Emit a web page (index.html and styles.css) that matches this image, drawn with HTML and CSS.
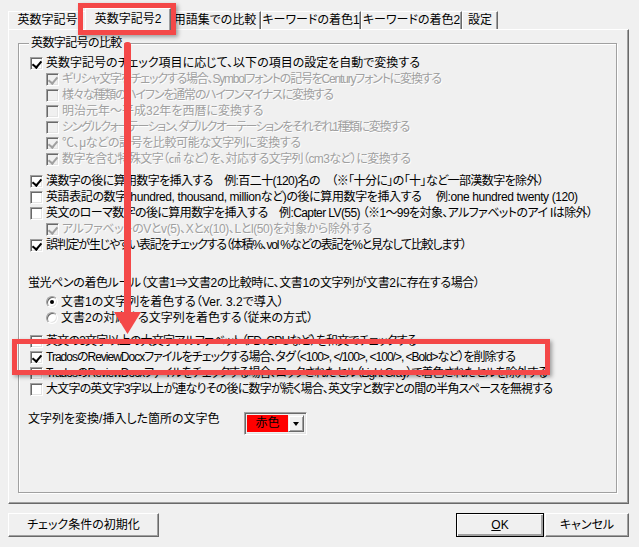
FILE: index.html
```html
<!DOCTYPE html>
<html lang="ja">
<head>
<meta charset="utf-8">
<link rel="stylesheet" href="styles.css">
</head>
<body>
<div class="window">
  <div class="tabs">
    <div class="tab t1">英数字記号</div>
    <div class="tab t2 active">英数字記号2</div>
    <div class="tab t3">用語集での比較</div>
    <div class="tab t4">キーワードの着色1</div>
    <div class="tab t5">キーワードの着色2</div>
    <div class="tab t6">設定</div>
  </div>
  <div class="panel">
    <fieldset class="group">
      <legend>英数字記号の比較</legend>
      <div class="block">
        <div class="row"><span class="cb on"></span><span class="lbl">英数字記号のチェック項目に応じて、以下の項目の設定を自動で変換する</span></div>
        <div class="row sub dis"><span class="cb on"></span><span class="lbl sq-d">ギリシャ文字をチェックする場合、Symbolフォントの記号をCenturyフォントに変換する</span></div>
        <div class="row sub dis"><span class="cb"></span><span class="lbl sq-d">様々な種類のハイフンを通常のハイフンマイナスに変換する</span></div>
        <div class="row sub dis"><span class="cb"></span><span class="lbl">明治元年～平成32年を西暦に変換する</span></div>
        <div class="row sub dis"><span class="cb"></span><span class="lbl sq-e">シングルクォーテーション、ダブルクオーテーションをそれぞれ1種類に変換する</span></div>
        <div class="row sub dis"><span class="cb on"></span><span class="lbl sq-a">℃、μなどの記号を比較可能な文字列に変換する</span></div>
        <div class="row sub dis"><span class="cb on"></span><span class="lbl sq-b">数字を含む特殊文字（㎠ など）を、対応する文字列（cm3など）に変換する</span></div>
      </div>
      <div class="block b2">
        <div class="row"><span class="cb on"></span><span class="lbl sq-b">漢数字の後に算用数字を挿入する　例:百二十(120)名の　（※「十分に」の「十」など一部漢数字を除外）</span></div>
        <div class="row"><span class="cb"></span><span class="lbl sq-a">英語表記の数字(hundred, thousand, millionなど)の後に算用数字を挿入する　 例:one hundred twenty (120)</span></div>
        <div class="row"><span class="cb"></span><span class="lbl sq-b">英文のローマ数字の後に算用数字を挿入する　例:Capter LV(55) （※1～99を対象、アルファベットのアイ Iは除外）</span></div>
        <div class="row sub dis"><span class="cb on"></span><span class="lbl sq-a">アルファベットのVとv(5)、Xとx(10)、Lとl(50)を対象から除外する</span></div>
        <div class="row"><span class="cb on"></span><span class="lbl sq-d">誤判定が生じやすい表記をチェックする（体積%、vol %などの表記を%と見なして比較します）</span></div>
      </div>
      <div class="caption sq-a">蛍光ペンの着色ルール（文書1⇒文書2の比較時に、文書1の文字列が文書2に存在する場合）</div>
      <div class="radios">
        <div class="row"><span class="rb on"></span><span class="lbl">文書1の文字列を着色する（Ver. 3.2で導入）</span></div>
        <div class="row"><span class="rb"></span><span class="lbl">文書2の対応する文字列を着色する（従来の方式）</span></div>
      </div>
      <div class="block b3">
        <div class="row"><span class="cb"></span><span class="lbl sq-c">英文の3文字以上の大文字アルファベット（FD、CPUなど）を和文でチェックする</span></div>
        <div class="row"><span class="cb on"></span><span class="lbl sq-f">TradosのReviewDocxファイルをチェックする場合、タグ（&lt;100&gt;, &lt;/100&gt;, &lt;100/&gt;, &lt;Bold&gt;など）を削除する</span></div>
        <div class="row"><span class="cb"></span><span class="lbl sq-f">TradosのReviewDocxファイルをチェックする場合、ロックされたセル（Light Gray）で着色されたセルを除外する</span></div>
        <div class="row"><span class="cb"></span><span class="lbl sq-c">大文字の英文字3字以上が連なりその後に数字が続く場合、英文字と数字との間の半角スペースを無視する</span></div>
      </div>
      <div class="colorrow">
        <span class="clabel">文字列を変換/挿入した箇所の文字色</span>
        <div class="combo"><span class="cval">赤色</span><span class="cbtn"><span class="tri"></span></span></div>
      </div>
    </fieldset>
  </div>
  <div class="buttons">
    <button class="btn reset">チェック条件の初期化</button>
    <span class="spacer"></span>
    <button class="btn ok"><u>O</u>K</button>
    <button class="btn cancel">キャンセル</button>
  </div>

  <div class="hl hl-tab"></div>
  <svg class="arrow" width="30" height="300" viewBox="0 0 30 300">
    <rect x="11" y="2" width="7" height="276" rx="3" fill="#f44848"/>
    <polygon points="1,272 28,272 14.5,294" fill="#f44848"/>
  </svg>
  <div class="hl hl-row"></div>
</div>
</body>
</html>
```
FILE: styles.css
```css
* { box-sizing: border-box; }
body {
  margin: 0;
  background: #f0f0f0;
  font-family: "Liberation Sans", "Noto Sans CJK JP", sans-serif;
  font-size: 12px;
  line-height: 16px;
  color: #000;
  font-feature-settings: "palt";
}
.window {
  width: 639px;
  height: 547px;
  position: relative;
  overflow: hidden;
}
.tabs {
  display: flex;
  align-items: flex-end;
  margin-left: 8px;
  height: 29px;
  position: relative;
  z-index: 2;
}
.tab {
  height: 18px;
  border-top: 1px solid #fff;
  border-left: 1px solid #fff;
  border-right: 1px solid #696969;
  box-shadow: inset -1px 0 #a0a0a0;
  text-align: center;
  line-height: 16px;
  white-space: nowrap;
  background: #f0f0f0;
}
.t1 { width: 79px; }
.t2 { width: 86px; }
.t3 { width: 92px; }
.t4 { width: 100px; }
.t5 { width: 101px; }
.t6 { width: 36px; }
.tab.active {
  height: 22px;
  margin: 0 -2px -1px -2px;
  padding-top: 2px;
  position: relative;
  z-index: 3;
}
.panel {
  margin-left: 8px;
  width: 621px;
  height: 475px;
  border: 1px solid;
  border-color: #fff #696969 #696969 #fff;
  box-shadow: inset -1px -1px #a0a0a0;
  padding: 5px 0 0 9px;
  position: relative;
  z-index: 1;
}
.group {
  margin: 0;
  width: 599px;
  height: 458px;
  border: 1px solid #a0a0a0;
  box-shadow: 1px 1px 0 #fff, inset 1px 1px 0 #fff;
  padding: 4px 0 0 11px;
  min-width: 0;
}
.group legend {
  margin-left: -1px;
  padding: 0 2px;
  background: #f0f0f0;
  line-height: 16px;
  letter-spacing: -0.6px;
}
.row {
  display: flex;
  align-items: center;
  height: 16px;
  white-space: nowrap;
}
.row .lbl { margin-left: 3px; }
.row.sub { padding-left: 16px; }
.row.dis .lbl { color: #a0a0a0; text-shadow: 1px 1px 0 #fff; }
.sq-a { letter-spacing: -0.4px; }
.sq-b { letter-spacing: -0.6px; }
.sq-c { letter-spacing: -0.8px; }
.sq-f { letter-spacing: -1px; }
.sq-d { letter-spacing: -1.2px; }
.sq-e { letter-spacing: -1.4px; }
.cb {
  flex: none;
  width: 13px;
  height: 13px;
  background: #fff;
  border: 1px solid;
  border-color: #a0a0a0 #fff #fff #a0a0a0;
  box-shadow: inset 1px 1px #696969, inset -1px -1px #e3e3e3;
  position: relative;
}
.cb.on::after {
  content: "";
  position: absolute;
  left: 3px;
  top: 1px;
  width: 4px;
  height: 7px;
  border-right: 2px solid #000;
  border-bottom: 2px solid #000;
  transform: rotate(40deg);
}
.dis .cb { background: #f0f0f0; }
.dis .cb.on::after { border-color: #a0a0a0; }
.b2 { margin-top: 6px; }
.caption { margin: 22px 0 0 -2px; height: 16px; white-space: nowrap; }
.radios { margin-top: 3px; padding-left: 16px; }
.rb {
  flex: none;
  width: 12px;
  height: 12px;
  border-radius: 50%;
  background: #fff;
  border: 1px solid;
  border-color: #a0a0a0 #fff #fff #a0a0a0;
  box-shadow: inset 1px 1px #696969, inset -1px -1px #e3e3e3;
  position: relative;
}
.rb.on::after {
  content: "";
  position: absolute;
  left: 3px;
  top: 3px;
  width: 4px;
  height: 4px;
  border-radius: 50%;
  background: #000;
}
.b3 { margin-top: 7px; }
.colorrow {
  margin: 15px 0 0 -2px;
  display: flex;
  align-items: flex-start;
  height: 23px;
}
.clabel { width: 216px; line-height: 14px; white-space: nowrap; }
.combo {
  width: 63px;
  height: 23px;
  display: flex;
  border: 1px solid;
  border-color: #a0a0a0 #fff #fff #a0a0a0;
  box-shadow: inset 1px 1px #696969, inset -1px -1px #e3e3e3;
  padding: 2px;
}
.cval {
  flex: 1;
  background: #ff0000;
  text-align: center;
  line-height: 17px;
}
.cbtn {
  width: 16px;
  background: #f0f0f0;
  border: 1px solid;
  border-color: #f0f0f0 #696969 #696969 #f0f0f0;
  box-shadow: inset 1px 1px #fff, inset -1px -1px #a0a0a0;
  display: flex;
  align-items: center;
  justify-content: center;
}
.tri {
  width: 0;
  height: 0;
  border-left: 3.5px solid transparent;
  border-right: 3.5px solid transparent;
  border-top: 4px solid #000;
}
.buttons {
  display: flex;
  margin: 9px 0 0 8px;
  width: 621px;
}
.spacer { flex: 1; }
.btn {
  font: inherit;
  font-feature-settings: "palt";
  height: 24px;
  padding: 0;
  background: #f0f0f0;
  color: #000;
  border: 1px solid;
  border-color: #fff #696969 #696969 #fff;
  box-shadow: inset -1px -1px #a0a0a0;
}
.reset { width: 151px; }
.ok { width: 88px; border: 1px solid #000; box-shadow: inset 1px 1px #fff, inset -2px -2px #a0a0a0; }
.cancel { width: 84px; margin-left: 1px; }
.hl {
  position: absolute;
  border: 5px solid #f44848;
  box-shadow: 2px 2px 4px rgba(0,0,0,0.35);
  z-index: 5;
}
.hl-tab { left: 78px; top: 3px; width: 98px; height: 32px; }
.hl-row { left: 12px; top: 339px; width: 538px; height: 36px; }
.arrow {
  position: absolute;
  left: 113px;
  top: 40px;
  z-index: 5;
}
```
